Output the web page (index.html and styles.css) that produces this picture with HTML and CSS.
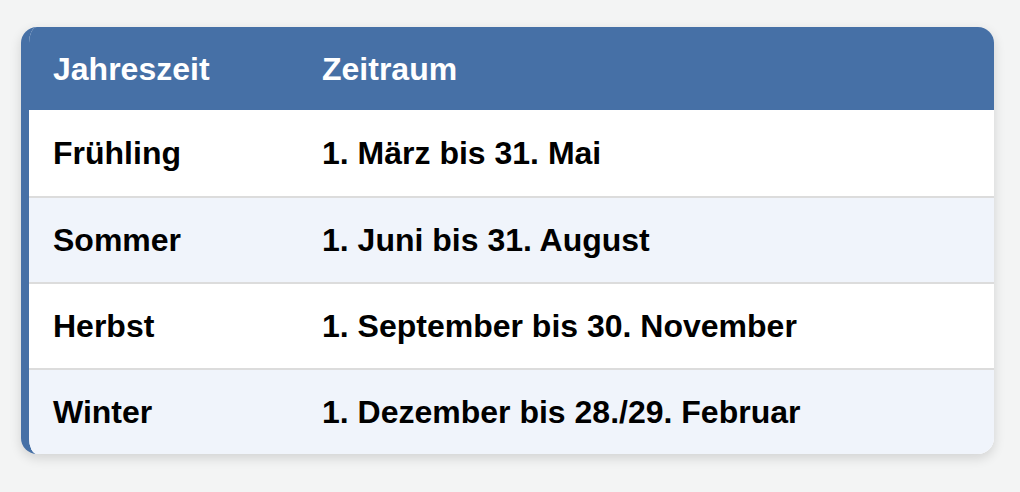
FILE: index.html
```html
<!DOCTYPE html>
<html lang="de">
<head>
<meta charset="utf-8">
<title>Jahreszeiten</title>
<link rel="stylesheet" href="styles.css">
</head>
<body>
<div class="card">
  <div class="row head"><div class="cell">Jahreszeit</div><div class="cell">Zeitraum</div></div>
  <div class="row"><div class="cell">Frühling</div><div class="cell">1. März bis 31. Mai</div></div>
  <div class="row alt sep"><div class="cell">Sommer</div><div class="cell">1. Juni bis 31. August</div></div>
  <div class="row sep"><div class="cell">Herbst</div><div class="cell">1. September bis 30. November</div></div>
  <div class="row alt sep"><div class="cell">Winter</div><div class="cell">1. Dezember bis 28./29. Februar</div></div>
</div>
</body>
</html>
```
FILE: styles.css
```css
html, body {
  margin: 0;
  padding: 0;
  background: #f3f4f4;
}
body {
  padding: 27px 26px 37px 21px;
  font-family: "Liberation Sans", Arial, Helvetica, sans-serif;
}
.card {
  background: #ffffff;
  border-left: 8px solid #4670a6;
  border-radius: 16px;
  overflow: hidden;
  box-shadow: 0 4px 12px rgba(0, 0, 0, 0.14);
}
.row {
  display: grid;
  grid-template-columns: 269px 1fr;
  align-items: center;
  height: 86px;
  box-sizing: border-box;
  color: #000000;
}
.row.head {
  height: 83px;
  background: #4670a6;
  color: #ffffff;
}
.row.sep {
  border-top: 2px solid #dcdcdc;
}
.row.alt {
  background: #f0f4fb;
}
.cell {
  padding-left: 24px;
  font-size: 32px;
  font-weight: bold;
  line-height: 1;
}
```
